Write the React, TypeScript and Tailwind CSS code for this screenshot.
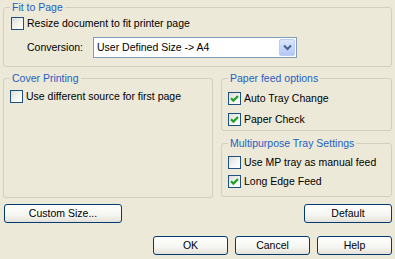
import React from "react";

const font = { fontFamily: '"Liberation Sans", Arial, sans-serif' };

function Check({ checked }: { checked?: boolean }) {
  return (
    <span className="w-[13px] h-[13px] shrink-0 border border-[#1C5180] bg-[linear-gradient(135deg,#dcdcd7_0%,#f6f6f3_60%,#ffffff_100%)] flex items-center justify-center">
      {checked && (
        <svg width="11" height="11" viewBox="0 0 11 11">
          <path d="M2 5.2 L4.4 7.6 L9 3" stroke="#21A121" strokeWidth="2.2" fill="none" />
        </svg>
      )}
    </span>
  );
}

function CheckRow({ label, checked, h, pl }: { label: string; checked?: boolean; h: string; pl: string }) {
  return (
    <div className={`flex items-center ${h} ${pl}`}>
      <Check checked={checked} />
      <span className="ml-[3px] text-[10.5px] leading-[13px] text-black whitespace-nowrap">{label}</span>
    </div>
  );
}

function Legend({ children }: { children: React.ReactNode }) {
  return (
    <legend className="ml-[6px] px-[2px] text-[10.5px] leading-[13px] text-[#1f5fc0] whitespace-nowrap">
      {children}
    </legend>
  );
}

function Btn({ label, w }: { label: string; w: string }) {
  return (
    <button
      className={`${w} h-[19px] border border-[#003C74] rounded-[3px] bg-[linear-gradient(180deg,#ffffff_0%,#f5f5f1_60%,#e4e1d8_100%)] text-[10.5px] leading-[13px] text-black flex items-center justify-center`}
      style={font}
    >
      {label}
    </button>
  );
}

export default function App() {
  return (
    <div className="w-[395px] h-[259px] bg-[#ECE9D8] px-[3px] pt-[1px] overflow-hidden" style={font}>
      <fieldset className="h-[66px] border border-[#D0D0BF] rounded-[3px]">
        <Legend>Fit to Page</Legend>
        <div className="pt-[1px]">
          <CheckRow label="Resize document to fit printer page" h="h-[16px]" pl="pl-[7px]" />
          <div className="mt-[6px] pl-[23px] flex items-center h-[21px]">
            <span className="w-[66px] text-[10.5px] leading-[13px] text-black">Conversion:</span>
            <div className="w-[204px] h-[21px] border border-[#7F9DB9] bg-white flex items-center">
              <span className="pl-[3px] flex-1 text-[10.5px] leading-[13px] text-black whitespace-nowrap">
                User Defined Size -&gt; A4
              </span>
              <div className="w-[16px] h-[17px] mr-[1px] rounded-[2px] border border-[#BACCF6] bg-[linear-gradient(180deg,#dbe6fd_0%,#c3d4fb_60%,#b2c6f6_100%)] flex items-center justify-center">
                <svg width="9" height="7" viewBox="0 0 9 7">
                  <path d="M1 1.5 L4.5 5 L8 1.5" stroke="#4D6185" strokeWidth="2" fill="none" />
                </svg>
              </div>
            </div>
          </div>
        </div>
      </fieldset>

      <div className="mt-[5px] flex gap-[8px]">
        <fieldset className="w-[210px] h-[126px] border border-[#D0D0BF] rounded-[3px]">
          <Legend>Cover Printing</Legend>
          <div className="pt-[2px]">
            <CheckRow label="Use different source for first page" h="h-[19px]" pl="pl-[6px]" />
          </div>
        </fieldset>
        <div className="w-[171px] flex flex-col">
          <fieldset className="h-[59px] border border-[#D0D0BF] rounded-[3px]">
            <Legend>Paper feed options</Legend>
            <div className="pt-[3px]">
              <CheckRow label="Auto Tray Change" checked h="h-[21px]" pl="pl-[6px]" />
              <CheckRow label="Paper Check" checked h="h-[21px]" pl="pl-[6px]" />
            </div>
          </fieldset>
          <fieldset className="mt-[6px] h-[60px] border border-[#D0D0BF] rounded-[3px]">
            <Legend>Multipurpose Tray Settings</Legend>
            <div className="pt-[3px]">
              <CheckRow label="Use MP tray as manual feed" h="h-[19px]" pl="pl-[6px]" />
              <CheckRow label="Long Edge Feed" checked h="h-[19px]" pl="pl-[6px]" />
            </div>
          </fieldset>
        </div>
      </div>

      <div className="mt-[6px] pl-[1px] flex justify-between">
        <Btn label="Custom Size..." w="w-[118px]" />
        <Btn label="Default" w="w-[88px]" />
      </div>

      <div className="mt-[13px] flex justify-end gap-[7px]">
        <Btn label="OK" w="w-[75px]" />
        <Btn label="Cancel" w="w-[75px]" />
        <Btn label="Help" w="w-[75px]" />
      </div>
    </div>
  );
}
